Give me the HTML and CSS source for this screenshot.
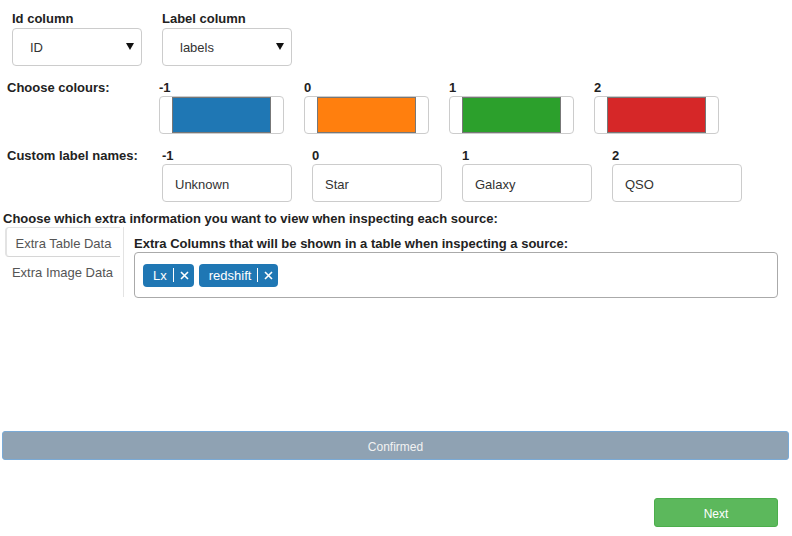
FILE: index.html
```html
<!DOCTYPE html>
<html>
<head>
<meta charset="utf-8">
<link rel="stylesheet" href="styles.css">
</head>
<body>
<div class="page">
  <div class="top">
    <div class="field">
      <div class="lbl">Id column</div>
      <div class="select"><span>ID</span><svg class="caret" width="8" height="7" viewBox="0 0 8 7"><path d="M0 0H8L4 7Z" fill="#111"/></svg></div>
    </div>
    <div class="field">
      <div class="lbl">Label column</div>
      <div class="select"><span>labels</span><svg class="caret" width="8" height="7" viewBox="0 0 8 7"><path d="M0 0H8L4 7Z" fill="#111"/></svg></div>
    </div>
  </div>

  <div class="colours">
    <div class="rowlabel">Choose colours:</div>
    <div class="items">
      <div class="citem"><div class="num">-1</div><div class="cbox"><div class="sw c0"></div></div></div>
      <div class="citem"><div class="num">0</div><div class="cbox"><div class="sw c1"></div></div></div>
      <div class="citem"><div class="num">1</div><div class="cbox"><div class="sw c2"></div></div></div>
      <div class="citem"><div class="num">2</div><div class="cbox"><div class="sw c3"></div></div></div>
    </div>
  </div>

  <div class="names">
    <div class="rowlabel wide">Custom label names:</div>
    <div class="items">
      <div class="nitem"><div class="num">-1</div><div class="input">Unknown</div></div>
      <div class="nitem"><div class="num">0</div><div class="input">Star</div></div>
      <div class="nitem"><div class="num">1</div><div class="input">Galaxy</div></div>
      <div class="nitem"><div class="num">2</div><div class="input">QSO</div></div>
    </div>
  </div>

  <div class="extra-title">Choose which extra information you want to view when inspecting each source:</div>

  <div class="tabs">
    <div class="nav">
      <div class="tab active">Extra Table Data</div>
      <div class="tab">Extra Image Data</div>
    </div>
    <div class="panel">
      <div class="panel-title">Extra Columns that will be shown in a table when inspecting a source:</div>
      <div class="tagbox">
        <div class="tag"><span class="tag-text">Lx</span><span class="tag-x"><svg width="9" height="9" viewBox="0 0 9 9"><path d="M1 1L8 8M8 1L1 8" stroke="#fff" stroke-width="1.6"/></svg></span></div>
        <div class="tag"><span class="tag-text">redshift</span><span class="tag-x"><svg width="9" height="9" viewBox="0 0 9 9"><path d="M1 1L8 8M8 1L1 8" stroke="#fff" stroke-width="1.6"/></svg></span></div>
      </div>
    </div>
  </div>

  <div class="confirmed">Confirmed</div>
  <div class="next-row"><div class="next">Next</div></div>
</div>
</body>
</html>
```
FILE: styles.css
```css
* { box-sizing: border-box; }
body {
  margin: 0;
  font-family: "Liberation Sans", Arial, sans-serif;
  font-size: 13px;
  color: #333;
  background: #fff;
}
.page { width: 792px; }

.top {
  display: flex;
  gap: 20px;
  padding: 11px 0 0 12px;
}
.field { width: 130px; }
.lbl {
  font-weight: bold;
  line-height: 16px;
  color: #222;
  margin-bottom: 1px;
}
.select {
  height: 38px;
  border: 1px solid #ccc;
  border-radius: 4px;
  display: flex;
  align-items: center;
  justify-content: space-between;
  padding: 1px 7px 0 17px;
  color: #333;
}
.caret { display: block; margin-top: -3px; }

.colours, .names {
  display: flex;
  padding-left: 7px;
  margin-top: 14px;
}
.rowlabel {
  width: 152px;
  font-weight: bold;
  line-height: 16px;
  color: #222;
}
.rowlabel.wide { width: 155px; }
.items { display: flex; gap: 20px; }
.num {
  font-weight: bold;
  line-height: 16px;
  color: #222;
}
.citem { width: 125px; }
.cbox {
  height: 38px;
  border: 1px solid #ccc;
  border-radius: 4px;
  padding: 0 12px;
}
.sw {
  height: 100%;
  border: 1px solid #777;
}
.c0 { background: #1f77b4; }
.c1 { background: #ff7f0e; }
.c2 { background: #2ca02c; }
.c3 { background: #d62728; }

.nitem { width: 130px; }
.input {
  height: 38px;
  border: 1px solid #ccc;
  border-radius: 4px;
  padding: 2px 0 0 12px;
  display: flex;
  align-items: center;
  color: #333;
}

.extra-title {
  margin-top: 9px;
  padding-left: 3px;
  font-weight: bold;
  line-height: 16px;
  color: #222;
}

.tabs {
  display: flex;
  margin-top: 0;
}
.nav {
  margin-left: 5px;
  width: 119px;
  height: 70px;
  border-right: 1px solid #e3e3e3;
  padding-right: 3px;
}
.tab {
  height: 29px;
  line-height: 31px;
  text-align: center;
  color: #555;
}
.tab.active {
  height: 30px;
  border: 1px solid #e3e3e3;
  border-left-width: 2px;
  border-bottom-color: #d6d6d6;
  border-right: none;
  border-radius: 4px 0 0 4px;
}
.panel {
  margin-left: 10px;
  width: 644px;
  padding-top: 9px;
}
.panel-title {
  font-weight: bold;
  line-height: 16px;
  color: #222;
}
.tagbox {
  height: 46px;
  border: 1px solid #aaa;
  border-radius: 4px;
  display: flex;
  align-items: center;
  gap: 5px;
  padding-left: 8px;
}
.tag {
  height: 23px;
  background: #1f77b4;
  border-radius: 4px;
  color: #fff;
  display: flex;
  align-items: center;
  padding-left: 10px;
}
.tag-text { padding-right: 6px; }
.tag-x {
  border-left: 1px solid #fff;
  height: 14px;
  display: flex;
  align-items: center;
  padding: 0 5px 0 6px;
}
.tag-x svg { display: block; }

.confirmed {
  margin: 133px 0 0 2px;
  width: 787px;
  height: 29px;
  background: #8fa2b3;
  border: 1px solid #7aaad6;
  border-radius: 3px;
  color: #f2f2f2;
  font-size: 12px;
  display: flex;
  align-items: center;
  justify-content: center;
  padding-top: 3px;
}
.next-row {
  display: flex;
  justify-content: flex-end;
  margin-top: 38px;
  padding-right: 14px;
}
.next {
  width: 124px;
  height: 29px;
  background: #5cb85c;
  border: 1px solid #4cae4c;
  border-radius: 3px;
  color: #fff;
  font-size: 12px;
  display: flex;
  align-items: center;
  justify-content: center;
  padding-top: 3px;
}
```
